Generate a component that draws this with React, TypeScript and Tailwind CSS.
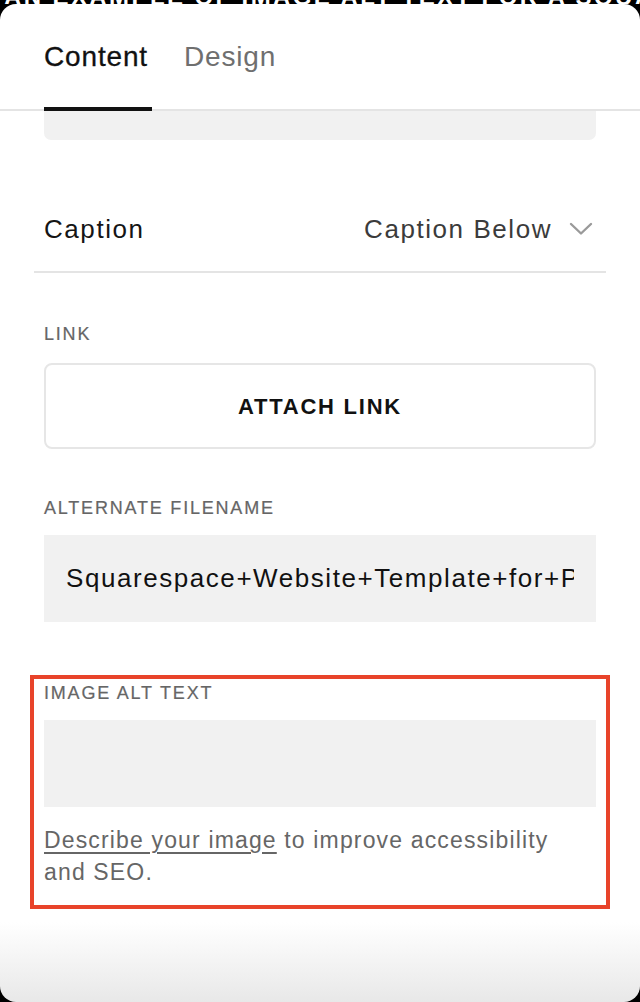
import React from "react";

const font = { fontFamily: '"Liberation Sans", Arial, sans-serif' };

const Label = ({ children }: { children: React.ReactNode }) => (
  <div className="h-[20px] leading-[20px] text-[18px] tracking-[0.1em] text-[#666] uppercase [-webkit-text-stroke:0.2px_#666]">
    {children}
  </div>
);

export default function App() {
  return (
    <div
      className="w-[640px] h-[1002px] bg-black flex flex-col overflow-hidden"
      style={font}
    >
      {/* page behind, mostly hidden */}
      <div className="h-[4px] shrink-0 overflow-hidden">
        <div className="-mt-[13px] pl-[4px] whitespace-nowrap text-[24px] leading-[20px] font-bold tracking-[0.1em] text-white">
          AN EXAMPLE OF IMAGE ALT TEXT FOR A SQUARESPACE WEBSITE TEMPLATE
        </div>
      </div>

      <div className="flex-1 flex flex-col rounded-[16px] bg-[linear-gradient(to_bottom,#ffffff_0%,#ffffff_92%,#e8e8e8_100%)] overflow-hidden">
        {/* Tabs */}
        <div className="h-[107px] shrink-0 flex items-start gap-[32px] px-[44px] border-b-2 border-[#e4e4e4]">
          <button className="w-[108px] h-[107px] pt-[3px] flex items-center border-b-4 border-[#111] text-[28px] tracking-[0.03em] text-[#111] [-webkit-text-stroke:0.3px_#111]">
            Content
          </button>
          <button className="h-[107px] pt-[3px] pb-[4px] flex items-center text-[28px] tracking-[0.03em] text-[#6f6f6f]">
            Design
          </button>
        </div>

        <div className="h-[29px] mx-[44px] bg-[#f1f1f1] rounded-b-[7px] shrink-0" />

        {/* Caption */}
        <div className="mt-[58px] h-[62px] px-[44px] flex items-center justify-between text-[26px] tracking-[0.06em]">
          <span className="text-[#151515]">Caption</span>
          <div className="flex items-center gap-[17px] pr-[3px]">
            <span className="text-[#3b3b3b]">Caption Below</span>
            <svg width="24" height="14" viewBox="0 0 24 14" fill="none">
              <path
                d="M2 2 L12 11.5 L22 2"
                stroke="#9a9a9a"
                strokeWidth="2.4"
                strokeLinecap="round"
                strokeLinejoin="round"
              />
            </svg>
          </div>
        </div>
        <div className="mt-[11px] h-[2px] mx-[34px] bg-[#e4e4e4]" />

        {/* Link */}
        <div className="mt-[51px] px-[44px]">
          <Label>Link</Label>
          <button className="mt-[19px] w-full h-[86px] border-2 border-[#e6e6e6] rounded-[8px] flex items-center justify-center text-[22px] font-semibold tracking-[0.08em] text-[#111]">
            ATTACH LINK
          </button>
        </div>

        {/* Alternate filename */}
        <div className="mt-[49px] px-[44px]">
          <Label>Alternate Filename</Label>
          <div className="mt-[17px] h-[87px] bg-[#f1f1f1] pl-[22px] pr-[22px] flex items-center overflow-hidden">
            <div className="w-full overflow-hidden whitespace-nowrap text-[26px] tracking-[0.06em] text-[#111]">
              Squarespace+Website+Template+for+Photographers.jpg
            </div>
          </div>
        </div>

        {/* Image alt text (highlighted) */}
        <div className="mt-[53px] mx-[30px] border-4 border-[#e8432a] px-[10px] pt-[4px] pb-[17px]">
          <Label>Image Alt Text</Label>
          <div className="mt-[17px] h-[87px] bg-[#f1f1f1]" />
          <p className="mt-[17px] text-[23px] leading-[32px] tracking-[0.05em] text-[#666]">
            <span className="underline underline-offset-[4px] decoration-[1.5px]">
              Describe your image
            </span>{" "}
            to improve accessibility
            <br />
            and SEO.
          </p>
        </div>
      </div>
    </div>
  );
}
